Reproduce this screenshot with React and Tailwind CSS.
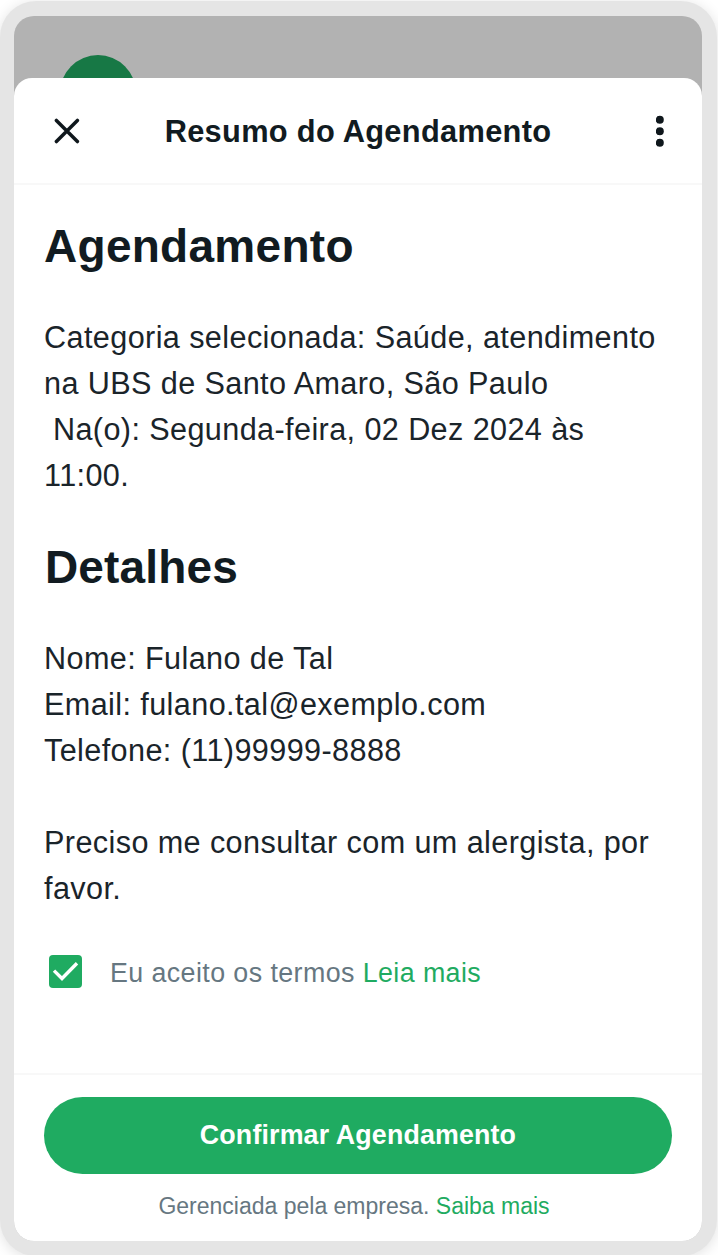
import { useState } from 'react';

function CloseIcon() {
  return (
    <svg viewBox="0 0 26 26" className="size-[26px]" fill="none" stroke="#0f171c" strokeWidth="3.5" strokeLinecap="round">
      <path d="M2.4 2.4 23.4 23.6M23.4 2.4 2.4 23.6" />
    </svg>
  );
}

function MoreIcon() {
  return (
    <svg viewBox="0 0 8 32" className="h-8 w-2" fill="#0f171c">
      <circle cx="3.8" cy="4.8" r="4" />
      <circle cx="3.8" cy="16.3" r="4" />
      <circle cx="3.8" cy="27.8" r="4" />
    </svg>
  );
}

function Header() {
  return (
    <header className="flex h-[107px] shrink-0 items-center border-b-2 border-[#f8f8f8] px-[38px]">
      <button type="button" aria-label="Fechar" className="w-8 pl-0.5">
        <CloseIcon />
      </button>
      <h1 className="flex-1 pt-0.5 text-center text-[30.8px] leading-10 font-bold tracking-[0.3px]">
        Resumo do Agendamento
      </h1>
      <button type="button" aria-label="Mais opções" className="flex w-8 justify-end">
        <MoreIcon />
      </button>
    </header>
  );
}

function Terms() {
  const [accepted, setAccepted] = useState(true);

  return (
    <div className="mt-[41px] flex items-start pl-[5px]">
      <button
        type="button"
        role="checkbox"
        aria-checked={accepted}
        aria-label="Aceito os termos"
        onClick={() => setAccepted(!accepted)}
        className="mt-[3px] flex size-[33px] items-center justify-center rounded-[4px] bg-[#1fab61]"
      >
        {accepted && (
          <svg viewBox="0 0 33 33" className="size-[33px]" fill="none" stroke="white" strokeWidth="3.4">
            <path d="m5 15.6 8 7.9L28 8.3" />
          </svg>
        )}
      </button>
      <p className="mt-px ml-7 text-[26.8px] leading-10 tracking-[0.42px] text-[#667781]">
        Eu aceito os termos <a className="text-[#1fab61]">Leia mais</a>
      </p>
    </div>
  );
}

export default function App() {
  return (
    <div className="h-[1255px] w-[718px] overflow-hidden bg-white font-['Liberation_Sans',Arial,sans-serif] text-[#111b21]">
      <div className="mt-px flex h-[1255px] w-[717px] flex-col rounded-[36px] bg-[#e5e5e5] pt-[15px] pr-[15px] pb-[15px] pl-[14px] shadow-[0_2px_14px_rgba(0,0,0,0.12)]">
        <div className="flex flex-1 flex-col overflow-hidden rounded-[20px] bg-[#b2b2b2]">
          <div className="h-[62px] shrink-0 overflow-hidden pt-[39px] pl-[46px]">
            <div className="size-[76px] rounded-full bg-[#177845]" />
          </div>
          <section className="flex flex-1 flex-col rounded-t-[18px] bg-white">
            <Header />
            <main className="flex-1 px-[30px] pt-[34px]">
              <h2 className="text-[46px] leading-[54px] font-bold tracking-[0.28px]">Agendamento</h2>
              <p className="mt-[41px] text-[30.6px] leading-[46px] tracking-[0.4px] whitespace-pre text-[#1a242a]">
                {'Categoria selecionada: Saúde, atendimento\nna UBS de Santo Amaro, São Paulo\n Na(o): Segunda-feira, 02 Dez 2024 às\n11:00.'}
              </p>
              <h2 className="mt-[42px] pl-px text-[46px] leading-[54px] font-bold tracking-[0.15px]">Detalhes</h2>
              <p className="mt-[41px] text-[30.6px] leading-[46px] tracking-[0.4px] whitespace-pre text-[#1a242a]">
                {'Nome: Fulano de Tal\nEmail: fulano.tal@exemplo.com\nTelefone: (11)99999-8888\n\nPreciso me consultar com um alergista, por\nfavor.'}
              </p>
              <Terms />
            </main>
            <footer className="flex h-[168px] shrink-0 flex-col border-t-2 border-[#f8f8f8] px-[30px] pt-[22px]">
              <button
                type="button"
                className="h-[77px] shrink-0 rounded-full bg-[#1fab61] text-[26.8px] font-bold tracking-[0.15px] text-white"
              >
                Confirmar Agendamento
              </button>
              <p className="mt-[17px] pr-2 text-center text-[23px] leading-[30px] text-[#667781]">
                Gerenciada pela empresa. <a className="text-[#1fab61]">Saiba mais</a>
              </p>
            </footer>
          </section>
        </div>
      </div>
    </div>
  );
}
